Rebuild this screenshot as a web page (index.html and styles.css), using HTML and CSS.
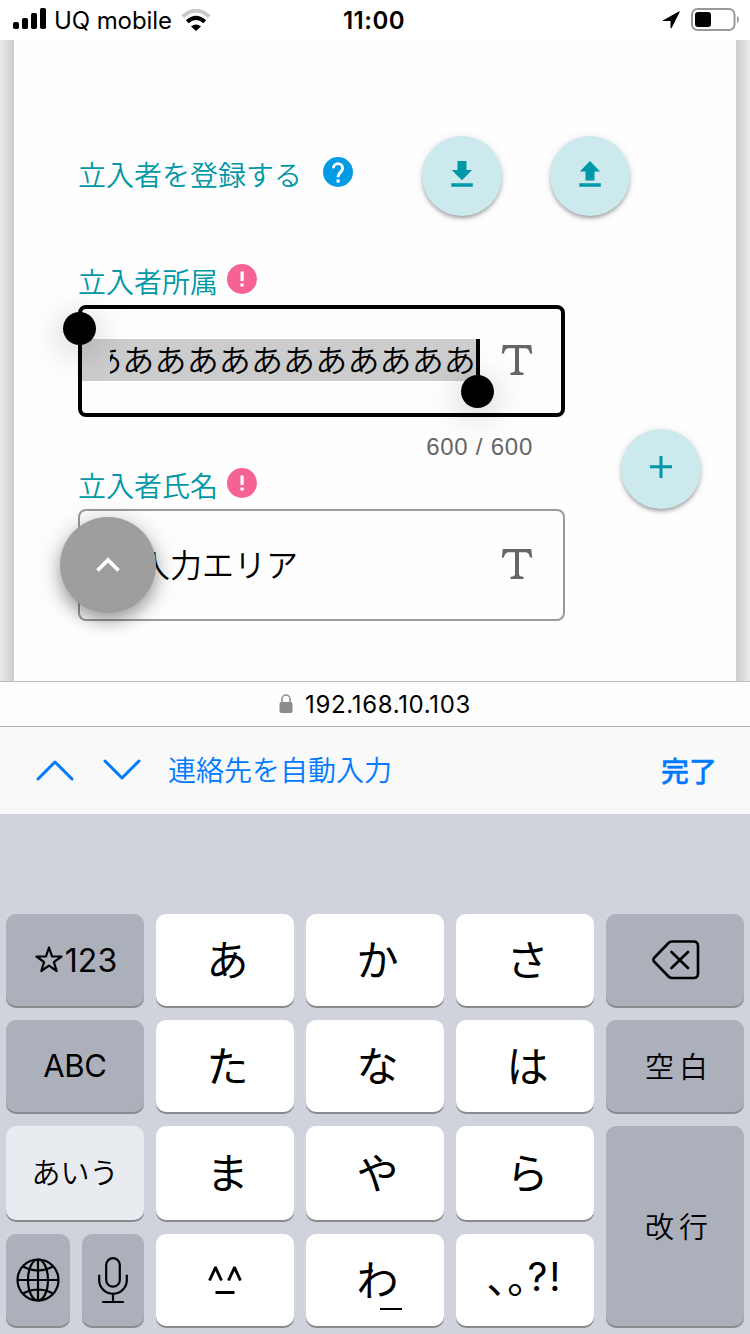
FILE: index.html
```html
<!DOCTYPE html>
<html lang="ja">
<head>
<meta charset="utf-8">
<title>立入者を登録する</title>
<link rel="stylesheet" href="styles.css">
</head>
<body>
<div class="screen">
  <header class="status">
    <div class="status-left">
      <svg class="signal" width="34" height="22" viewBox="0 0 34 22"><rect x="0" y="14" width="6" height="7" rx="1.7"/><rect x="9" y="10" width="6" height="11" rx="1.7"/><rect x="18" y="5" width="6" height="16" rx="1.7"/><rect x="27" y="0" width="6" height="21" rx="1.7"/></svg>
      <span class="carrier">UQ mobile</span>
      <svg width="30" height="22" viewBox="0 0 30 22" fill="none"><path d="M1.700 7.400Q15-4 28.300 7.400" stroke="#cbcbcb" stroke-width="4"/><path d="M6.300 12.800Q15 5 23.700 12.800" stroke="#000" stroke-width="4.200"/><path d="M10 17.500Q15 13.300 20 17.500L15 22Z" fill="#000"/></svg>
    </div>
    <span class="clock">11:00</span>
    <div class="status-right">
      <svg width="18" height="18" viewBox="0 0 18 18"><path d="M.8 9.500 16.800.5Q18 0 17.600 1.200L9.600 17Q8.600 18 8.500 16.600V9.900L1.200 10.100Q0 10 .8 9.500Z"/></svg>
      <svg width="48" height="24" viewBox="0 0 48 24"><rect x="1" y="1" width="42.500" height="21" rx="5.500" fill="none" stroke="#999" stroke-width="2"/><rect x="4" y="4" width="16" height="15" rx="3" fill="#000"/><path d="M46 8Q48 9 48 11.500T46 15Z" fill="#999"/></svg>
    </div>
  </header>

  <main class="page">
    <section class="card">
      <div class="title-row">
        <h1 class="label">立入者を登録する</h1>
        <svg class="help" width="30" height="30" viewBox="0 0 30 30"><circle cx="15" cy="15" r="15" fill="#039be5"/><path d="M10.400 11.200a4.600 4.600 0 0 1 9.200 0c0 3.800-4.600 4.200-4.600 9" fill="none" stroke="#fff" stroke-width="2.900"/><path d="M13.500 22.400h3.200v3.200h-3.200z" fill="#fff"/></svg>
        <button class="fab"><svg width="22" height="26" viewBox="0 0 22 26"><path d="M6.500 0h9v9H21L11 19.300.800 9h5.700zM.300 22.300h21.500v3.400H.3z"/></svg></button>
        <button class="fab"><svg width="22" height="26" viewBox="0 0 22 26"><path d="M6.500 19.600h9v-9H21L11 0 .8 10.600h5.700zM.3 22.300h21.500v3.400H.3z"/></svg></button>
      </div>
      <div class="form">
        <div class="fields">
          <div class="label-row"><span class="label">立入者所属</span><svg class="required" width="30" height="30" viewBox="0 0 30 30"><circle cx="15" cy="15" r="15" fill="#f76295"/><path d="M13.500 7.500h3.200v9.500h-3.200zM13.500 19.500h3.200v3h-3.200z" fill="#fff"/></svg></div>
          <div class="box focused">
            <div class="selection"><span class="value">あああああああああああああ</span><i class="handle start"></i><i class="handle end"></i></div>
            <svg class="type" width="32" height="32" viewBox="0 0 32 32"><path d="M1.800 1h28.400l1 8.500h-2.300C28.300 6.200 27 4.300 23.500 4.300H18V26c0 2 1.300 2.600 4.500 2.800V31h-13v-2.200c3.200-.2 4.500-.8 4.500-2.800V4.300H8.500C5 4.300 3.700 6.200 3 9.500H.8Z"/></svg>
          </div>
          <div class="counter">600 / 600</div>
          <div class="label-row"><span class="label">立入者氏名</span><svg class="required" width="30" height="30" viewBox="0 0 30 30"><circle cx="15" cy="15" r="15" fill="#f76295"/><path d="M13.500 7.500h3.200v9.500h-3.200zM13.500 19.500h3.200v3h-3.200z" fill="#fff"/></svg></div>
          <div class="box">
            <span class="placeholder">入力エリア</span>
            <svg class="type" width="32" height="32" viewBox="0 0 32 32"><path d="M1.800 1h28.400l1 8.500h-2.300C28.300 6.200 27 4.300 23.500 4.300H18V26c0 2 1.300 2.600 4.500 2.800V31h-13v-2.200c3.200-.2 4.500-.8 4.500-2.800V4.300H8.500C5 4.300 3.700 6.200 3 9.500H.8Z"/></svg>
            <button class="to-top"><svg width="24" height="16" viewBox="0 0 24 16" fill="none" stroke="#fff" stroke-width="3.800"><path d="M1.500 13.500 12 3l10.500 10.500"/></svg></button>
          </div>
        </div>
        <button class="fab add"><svg width="22" height="22" viewBox="0 0 22 22"><path d="M9.500 0h3v9.300H22v3h-9.500V22h-3v-9.700H0v-3h9.500z"/></svg></button>
      </div>
    </section>
  </main>

  <div class="address">
    <svg width="14" height="19" viewBox="0 0 14 19"><rect x="0.500" y="8" width="13" height="11" rx="2" fill="#8a8a8f"/><path d="M3 8.500V5a4 4 0 0 1 8 0v3.500" fill="none" stroke="#8a8a8f" stroke-width="1.500"/></svg>
    <span>192.168.10.103</span>
  </div>

  <div class="toolbar">
    <svg width="38" height="22" viewBox="0 0 38 22"><path d="M2 20 19 3l17 17"/></svg>
    <svg width="38" height="22" viewBox="0 0 38 22"><path d="M2 2l17 17L36 2"/></svg>
    <span class="autofill">連絡先を自動入力</span>
    <span class="done">完了</span>
  </div>

  <div class="keyboard">
    <div class="key dark latin"><svg class="star" width="28" height="27" viewBox="0 0 28 27"><path d="M14 1.500 17 10.300 26.500 10.500 18.900 16.200 21.700 25 14 19.700 6.300 25 9.100 16.200 1.500 10.500 11 10.300Z" fill="none" stroke="#000" stroke-width="2.200" stroke-linejoin="round"/></svg>123</div>
    <div class="key kana">あ</div><div class="key kana">か</div><div class="key kana">さ</div>
    <div class="key dark"><svg class="erase" width="48" height="40" viewBox="0 0 48 40" fill="none" stroke="#000" stroke-width="2.600" stroke-linejoin="round" stroke-linecap="round"><path d="M20 1.500H41.500Q46 1.500 46 6V33.500Q46 38 41.500 38H20Q18 38 16.500 36.500L2 21.500Q.7 19.700 2 18L16.500 3Q18 1.500 20 1.500ZM19.500 12 36 28M36 12 19.500 28"/></svg></div>

    <div class="key dark latin abc">ABC</div>
    <div class="key kana">た</div><div class="key kana">な</div><div class="key kana">は</div>
    <div class="key dark word">空白</div>

    <div class="key pale">あいう</div>
    <div class="key kana">ま</div><div class="key kana">や</div><div class="key kana">ら</div>
    <div class="key dark word return">改行</div>

    <div class="pair">
      <div class="key dark"><svg width="44" height="44" viewBox="0 0 44 44" fill="none" stroke="#000" stroke-width="2.200"><circle cx="22" cy="22" r="20.500"/><ellipse cx="22" cy="22" rx="10" ry="20.500"/><path d="M22 1.500v41M1.500 22h41M7 8.500q15 8 30 0M7 35.500q15-8 30 0"/></svg></div>
      <div class="key dark"><svg width="30" height="46" viewBox="0 0 30 46" fill="none" stroke="#000" stroke-width="2.200" stroke-linecap="round"><rect x="8.200" y="1.200" width="13.600" height="28.500" rx="6.800"/><path d="M1.200 18.500V23a13.800 13.800 0 0 0 27.600 0v-4.500M15 37v8M5 45h20"/></svg></div>
    </div>
    <div class="key"><svg width="34" height="28" viewBox="0 0 34 28" fill="none" stroke="#000" stroke-width="2.900"><path d="M1.500 14.500 7.300 2h.4l5.800 12.500M20.500 14.500 26.300 2h.4l5.800 12.500M7.500 26.500h19"/></svg></div>
    <div class="key kana wa">わ<i class="bar"></i></div>
    <div class="key punct"><span>､｡</span><span class="ascii">?!</span></div>
  </div>
</div>
</body>
</html>
```
FILE: styles.css
```css
* { box-sizing: border-box; }
body { margin: 0; font-family: Inter, "Noto Sans CJK JP", sans-serif; color: #000; }
svg { display: block; flex: none; }
button { border: 0; padding: 0; font: inherit; }

.screen { width: 750px; height: 1334px; display: flex; flex-direction: column; overflow: hidden; background: #fff; }

.status { height: 40px; flex: none; display: grid; grid-template-columns: 1fr auto 1fr; align-items: center; padding: 0 11px 0 13px; }
.status-left { display: flex; align-items: center; gap: 8px; }
.signal { margin-top: -2px; }
.carrier { font-size: 24px; letter-spacing: -.1px; margin-left: -1px; padding-top: 1px; }
.status-left svg:last-child { margin-left: 1px; }
.clock { font-size: 24px; font-weight: 600; letter-spacing: .5px; padding-top: 1px; margin-left: -4px; }
.status-right { display: flex; justify-content: flex-end; align-items: center; gap: 11px; }

.page { height: 641px; flex: none; padding: 0 14px; background: linear-gradient(90deg, #ebebeb 0, #cdcdcd 14px, #cdcdcd 736px, #ebebeb 750px); }
.card { height: 100%; padding: 96px 0 0 64px; background: #fefefe; }
.title-row { height: 80px; display: flex; align-items: center; }
.label { margin: -5px 0 0; font: 350 28px/40px "Noto Sans CJK JP", sans-serif; color: #0097a7; }
.title-row .label { width: 245px; }
.help { margin: -9px 69px 0 0; }
.fab { width: 80px; height: 80px; flex: none; border-radius: 50%; display: flex; align-items: center; justify-content: center; background: #cce9ed; box-shadow: 0 3px 4px -1px rgba(0,0,0,.36), 0 1px 10px rgba(0,0,0,.1); }
.fab svg { fill: #0097a7; margin-top: -4px; }
.title-row .fab + .fab { margin-left: 48px; }

.form { display: flex; gap: 56px; padding-top: 45px; }
.fields { width: 487px; }
.label-row { height: 44px; display: flex; align-items: center; gap: 9px; }
.label-row .required { margin-top: -9px; }
.box { position: relative; height: 112px; display: flex; align-items: center; justify-content: space-between; padding-right: 30px; border: 2px solid #9b9b9b; border-radius: 8px; }
.box.focused { border: 4px solid #000; padding-right: 28px; }
.selection { position: relative; width: 398px; height: 42px; margin-top: -2px; padding-left: 28px; background: #ccc; border-right: 4px solid #000; }
.value { height: 42px; display: flex; justify-content: flex-end; overflow: hidden; white-space: nowrap; font: 350 32px/38px "Noto Sans CJK JP", sans-serif; letter-spacing: .15px; }
.handle { position: absolute; width: 33px; height: 33px; border-radius: 50%; background: #000; box-shadow: 0 6px 34px rgba(0,0,0,.25); }
.handle.start { left: -19px; top: -27px; }
.handle.end { right: -18px; top: 36px; }
.type { fill: #666; margin-top: -3px; }
.counter { height: 48px; padding: 16px 32px 0 0; text-align: right; font: 24px/28px "Liberation Sans", sans-serif; letter-spacing: .75px; color: #666; }
.placeholder { padding-left: 58px; margin-top: -5px; font: 350 32px/42px "Noto Sans CJK JP", sans-serif; }
.to-top { position: absolute; left: -20px; top: 6px; width: 96px; height: 96px; border-radius: 50%; display: flex; align-items: center; justify-content: center; background: #9e9e9e; box-shadow: 0 8px 16px rgba(0,0,0,.3), 0 3px 30px rgba(0,0,0,.16); }
.add { margin-top: 168px; }

.address { height: 46px; flex: none; display: flex; align-items: center; justify-content: center; gap: 12px; border-top: 1px solid #bdbdbd; border-bottom: 1px solid #b2b2b2; background: #fdfdfd; font-size: 24px; letter-spacing: .65px; }
.address svg { margin-top: -1px; }

.toolbar { height: 87px; flex: none; display: flex; align-items: center; padding: 0 34px 0 36px; background: #f9f9f9; color: #007aff; font: 350 28px/40px "Noto Sans CJK JP", sans-serif; }
.toolbar svg { fill: none; stroke: #007aff; stroke-width: 3; stroke-linecap: round; stroke-linejoin: round; margin-top: -2px; }
.toolbar svg + svg { margin-left: 29px; }
.autofill { margin: -3px 0 0 27px; }
.done { margin: -1px -1px 0 auto; font-weight: 500; -webkit-text-stroke: .35px #007aff; }

.keyboard { flex: 1; display: grid; grid-template-columns: repeat(5, 138px); grid-template-rows: 92px 92px 94px 92px; gap: 14px 12px; padding: 100px 6px 0; background: #d0d3db; }
.key { display: flex; align-items: center; justify-content: center; border-radius: 10px; background: #fff; box-shadow: 0 2px 0 #888a8e; font-family: "Noto Sans CJK JP", sans-serif; }
.kana { font-size: 42px; line-height: 60px; font-weight: 400; padding: 0 0 5px 5px; }
.dark { background: #abb0bb; }
.pale { background: #e8ebf0; font-size: 29px; font-weight: 350; padding-bottom: 4px; }
.latin { font-family: Inter, sans-serif; font-size: 32px; }
.abc { font-size: 31px; letter-spacing: -.3px; padding-bottom: 1px; }
.star { margin: -2px 2px 0 2px; }
.erase { margin: -1px 0 0 1px; }
.word { font-size: 29px; letter-spacing: 5px; padding: 0 0 3px 8px; font-weight: 350; }
.return { grid-row: 3 / 5; grid-column: 5; }
.pair { display: grid; grid-template-columns: 64px 62px; gap: 12px; }
.pair svg { margin-top: -1px; }
.wa { position: relative; }
.bar { position: absolute; left: 74px; top: 74px; width: 22px; height: 2px; background: #000; }
.punct { font-size: 40px; padding-bottom: 8px; }
.ascii { font: 400 39px Inter, sans-serif; letter-spacing: 2px; }
```
